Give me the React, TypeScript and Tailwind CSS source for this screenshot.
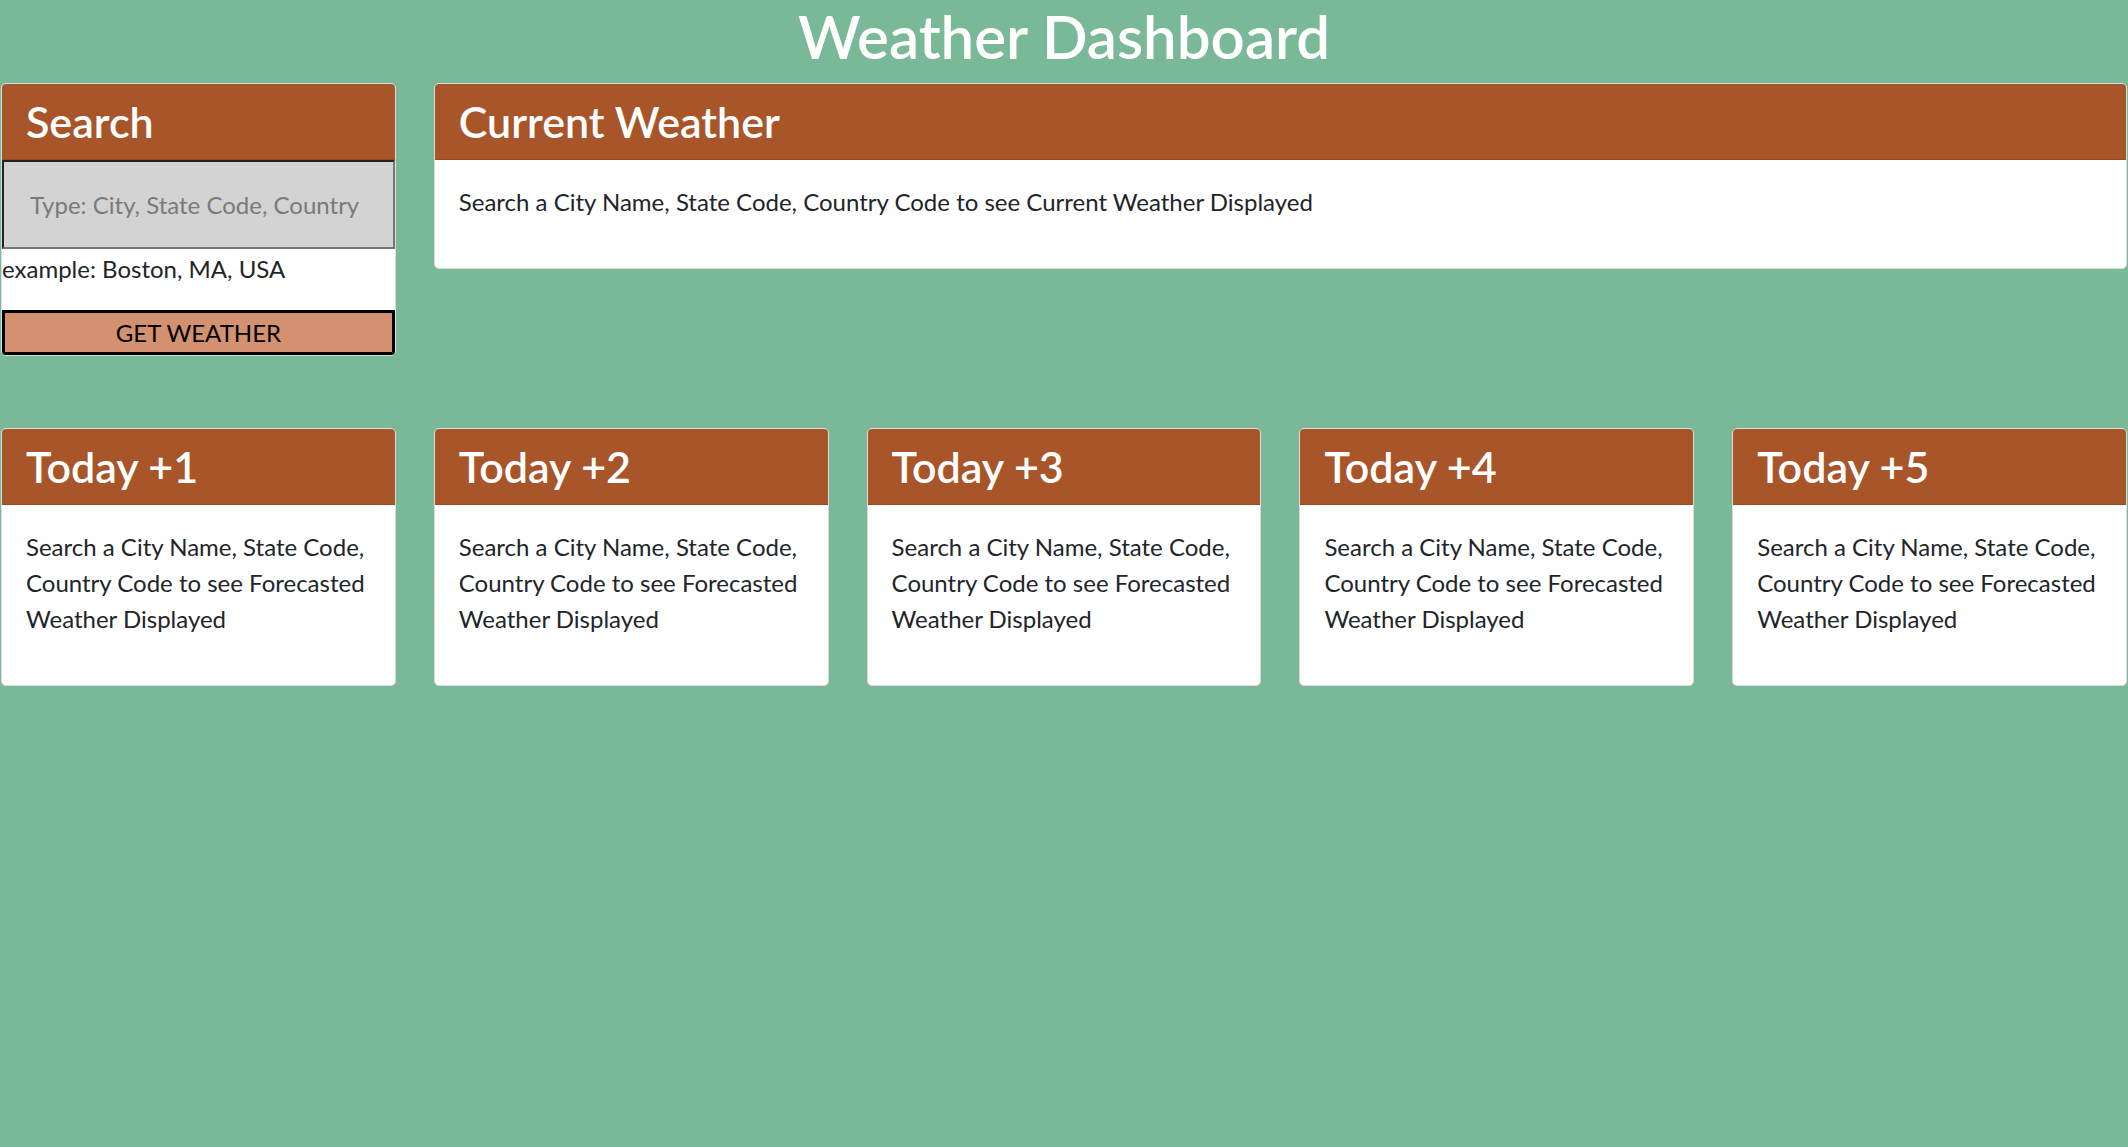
import React from 'react';

const forecastDays = ['Today +1', 'Today +2', 'Today +3', 'Today +4', 'Today +5'];

function CardHeader({ title }: { title: string }) {
  return (
    <div className="h-[76px] bg-[#a8552a] px-[24px] flex items-center border-b border-[#9a4b24]">
      <h2 className="text-white text-[43px] leading-none font-semibold">{title}</h2>
    </div>
  );
}

export default function App() {
  return (
    <div className="min-h-screen bg-[#79b997] font-['Lato',sans-serif] text-[#212529]">
      <h1 className="text-center text-white text-[60px] leading-[72px] font-semibold mb-[11px]">Weather Dashboard</h1>

      <div className="grid grid-cols-5 gap-x-[38px] px-px items-start">
        <div className="bg-white rounded-[5px] border border-[#dcdcdc] overflow-hidden">
          <CardHeader title="Search" />
          <input
            type="text"
            placeholder="Type: City, State Code, Country"
            className="block w-full h-[89px] bg-[#d3d3d3] px-[26px] text-[24px] placeholder:text-[#7a7a7a] border-2 border-t-[#222] border-l-[#222] border-b-[#767676] border-r-[#767676] outline-none"
          />
          <p className="text-[24px] leading-[36px] mt-[2px]">example: Boston, MA, USA</p>
          <button className="mt-[23px] block w-full h-[45px] bg-[#d4916f] border-[3px] border-black text-[24px] leading-none text-black">
            GET WEATHER
          </button>
        </div>

        <div className="col-span-4 bg-white rounded-[5px] border border-[#dcdcdc] overflow-hidden">
          <CardHeader title="Current Weather" />
          <div className="p-[24px]">
            <p className="text-[24px] leading-[36px] mb-[24px]">
              Search a City Name, State Code, Country Code to see Current Weather Displayed
            </p>
          </div>
        </div>
      </div>

      <div className="grid grid-cols-5 gap-x-[38px] px-px mt-[72px] items-start">
        {forecastDays.map((day) => (
          <div key={day} className="bg-white rounded-[5px] border border-[#dcdcdc] overflow-hidden">
            <CardHeader title={day} />
            <div className="p-[24px]">
              <p className="text-[24px] leading-[36px] mb-[24px]">
                Search a City Name, State Code, Country Code to see Forecasted Weather Displayed
              </p>
            </div>
          </div>
        ))}
      </div>
    </div>
  );
}
